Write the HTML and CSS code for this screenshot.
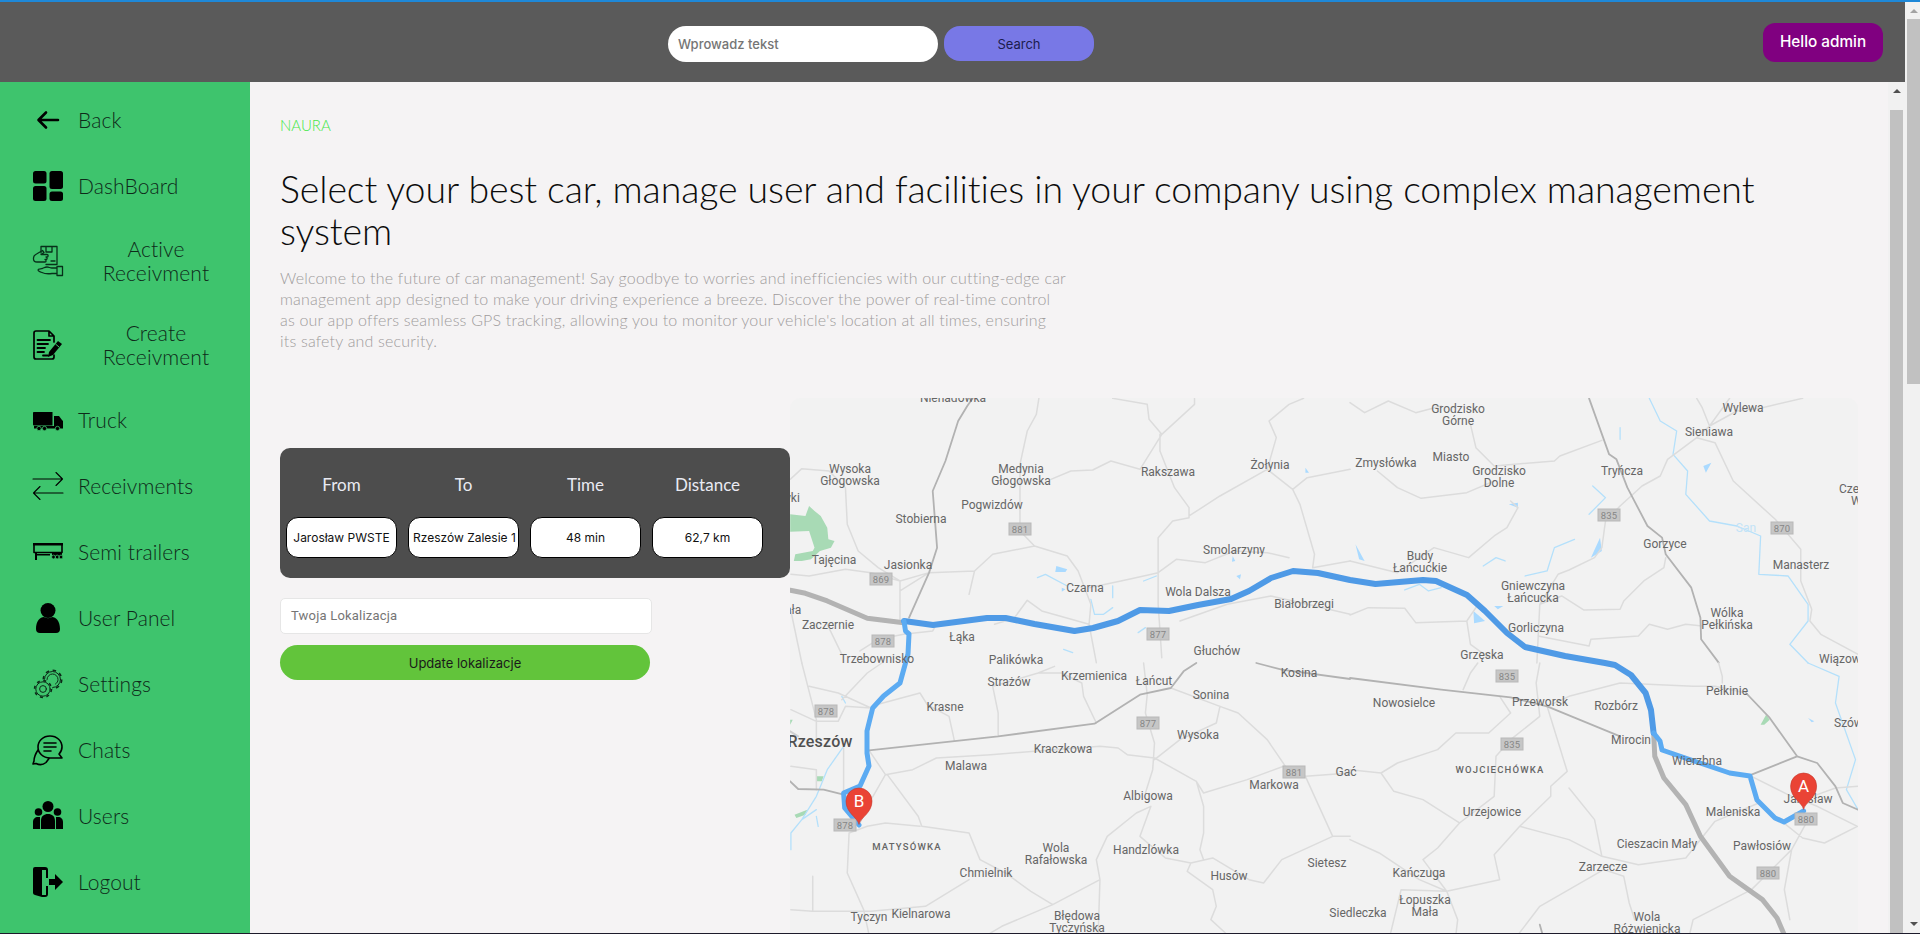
FILE: index.html
```html
<!DOCTYPE html>
<html lang="pl">
<head>
<meta charset="utf-8">
<title>NAURA</title>
<link rel="stylesheet" href="styles.css">
</head>
<body>
<div class="page">
  <div class="topline"></div>
  <div class="shell">
    <div class="main">
      <header class="header">
        <div class="search">
          <div class="search-input">Wprowadz tekst</div>
          <button class="search-btn">Search</button>
        </div>
        <div class="hello">Hello admin</div>
      </header>
      <div class="body">
        <nav class="sidebar">
          <a class="item"><svg class="icon" viewBox="0 0 30 30"><path class="ln" stroke-width="2.600" d="M25 15H6M13 7.500 5.500 15l7.500 7.500"/></svg><span>Back</span></a>
          <a class="item"><svg class="icon" viewBox="0 0 30 30"><rect class="fl" x="0" y="0" width="13.500" height="12.500" rx="2.500"/><rect class="fl" x="0" y="15" width="13.500" height="15" rx="2.500"/><rect class="fl" x="16.500" y="0" width="13.500" height="18" rx="2.500"/><rect class="fl" x="16.500" y="20.500" width="13.500" height="9.500" rx="2.500"/></svg><span>DashBoard</span></a>
          <a class="item two"><svg class="icon" viewBox="0 0 30 30"><path class="ln thin" d="M8 7V.5h16v18H13M13 .5v5.500h6V.5M18 15h4"/><path class="ln thin" d="M.5 12c0-2 1-3 3-4l6-3.500 1.500 2-3 2h6c1.500 0 1.500 2.500 0 2.500h-1c1.500 0 1.500 2.500 0 2.500h-1c1.500 0 1.500 2.500 0 2.500H4c-2.500 0-3.500-1-3.500-3z"/><path class="ln thin" d="M24 20.500h5.500V29.500H24zM24 22h-5c-2 0-3-1-5-1-2.500 0-3 1-5 1.500-1 .5-4 0-4 1.500s2 1.500 4 2.500c3 1.500 6 1.500 10 1h5"/></svg><span>Active<br>Receivment</span></a>
          <a class="item two"><svg class="icon" viewBox="0 0 30 30"><path class="ln" stroke-width="1.700" d="M21 12V6l-5-5H3Q1 1 1 3v24q0 2 2 2h16q2 0 2-2v-2M16 1v5h5"/><path class="ln" stroke-width="1.800" d="M4.500 10H17M4.500 14H15M4.500 18H12M4.500 22H11M10 25.500h5"/><path class="fl" d="M25 11l4 3-9 11-5 2 1-5z"/><path class="gap" d="M22.500 14l3.500 3"/></svg><span>Create<br>Receivment</span></a>
          <a class="item"><svg class="icon" viewBox="0 0 30 30"><path class="fl" d="M0 7.500Q0 7 1 7h18.500v13.500H1q-1 0-1-1zM21 11h5l3 4 1 1v5h-9zM1 21h29v2.500H1z"/><circle class="fl wheel" cx="6" cy="23.500" r="2.200"/><circle class="fl wheel" cx="11.500" cy="23.500" r="2.200"/><circle class="fl wheel" cx="24.500" cy="23.500" r="2.200"/></svg><span>Truck</span></a>
          <a class="item"><svg class="icon" viewBox="0 0 30 30"><path class="ln" stroke-width="1.100" d="M0 8h29.500M23 1.500 29.500 8 23 14.500M30 22H.5M7 15.500.5 22 7 28.500"/></svg><span>Receivments</span></a>
          <a class="item"><svg class="icon" viewBox="0 0 30 30"><path class="ln" stroke-width="1.600" d="M1 7h28v8.500H1z"/><path class="fl" d="M0 6h30v2.500H0zM2 17h15v1.500H2zM19 15.500h10V19H19z"/><circle class="fl wheel" cx="20.500" cy="20" r="1.900"/><circle class="fl wheel" cx="24.200" cy="20" r="1.900"/><circle class="fl wheel" cx="28" cy="20" r="1.900"/><path class="fl" d="M2 15h2v8H2z"/></svg><span>Semi trailers</span></a>
          <a class="item"><svg class="icon" viewBox="0 0 30 30"><circle class="fl" cx="15" cy="7.500" r="7.500"/><path class="fl" d="M3 26c0-8 4-12 8-12 2 1.500 6 1.500 8 0 4 0 8 4 8 12q0 4-4 4H7q-4 0-4-4z"/></svg><span>User Panel</span></a>
          <a class="item"><svg class="icon" viewBox="0 0 30 30"><circle class="ln hair" cx="19.500" cy="10.500" r="8"/><circle class="teeth big" cx="19.500" cy="10.500" r="9.200"/><path class="ln hair" d="M14 10.500a5.500 5.500 0 0 1 11 0c0 2-1 3.500-2.500 4.500"/><circle class="mask" cx="10" cy="20" r="9.500"/><circle class="ln hair" cx="10" cy="20" r="7.200"/><circle class="teeth" cx="10" cy="20" r="8.400"/><circle class="ln hair" cx="10" cy="20" r="3.400"/></svg><span>Settings</span></a>
          <a class="item"><svg class="icon" viewBox="0 0 30 30"><path class="ln mid" d="M17 1C10 1 5 6 5 12c0 6 5 11 12 11h12l-3-4c2-2 3-4 3-7 0-6-5-11-12-11z"/><path class="ln mid" d="M5 15c-2 3-4 6-4 11l-1 3 3-.5c3 1.500 7 1.500 10-1l3-4"/><path class="ln mid" d="M11 8h12M11 12h12M11 16h7"/></svg><span>Chats</span></a>
          <a class="item"><svg class="icon" viewBox="0 0 30 30"><circle class="fl" cx="15" cy="5.500" r="5.500"/><circle class="fl" cx="5.500" cy="11" r="3.800"/><circle class="fl" cx="24.500" cy="11" r="3.800"/><path class="fl" d="M8 28v-8c0-5 3-7 7-7s7 2 7 7v8zM0 28v-7c0-3 2-5 5-5h2v12zM30 28v-7c0-3-2-5-5-5h-2v12z"/></svg><span>Users</span></a>
          <a class="item"><svg class="icon" viewBox="0 0 30 30"><path class="fl" d="M0 2q0-2 2-2h10q3 0 3 3v8h-2V3H9v27l-7-2q-2-.5-2-2z"/><path class="fl" d="M13 19h2v8q0 3-3 3H9v-2h4zM16 12h6V7l8 8-8 8v-5h-6z"/></svg><span>Logout</span></a>
        </nav>
        <main class="content">
          <p class="brand">NAURA</p>
          <h1 class="title">Select your best car, manage user and facilities in your company using complex management<br>system</h1>
          <p class="intro">Welcome to the future of car management! Say goodbye to worries and inefficiencies with our cutting-edge car<br>management app designed to make your driving experience a breeze. Discover the power of real-time control<br>as our app offers seamless GPS tracking, allowing you to monitor your vehicle's location at all times, ensuring<br>its safety and security.</p>
          <section class="tools">
            <div class="left">
              <div class="panel">
                <div class="cols heads"><span>From</span><span>To</span><span>Time</span><span>Distance</span></div>
                <div class="cols vals"><div class="val">Jarosław PWSTE</div><div class="val clip">Rzeszów Zalesie 1</div><div class="val">48 min</div><div class="val">62,7 km</div></div>
              </div>
              <div class="loc">Twoja Lokalizacja</div>
              <button class="update">Update lokalizacje</button>
            </div>
            <div class="map">
              <svg class="mapsvg" viewBox="790 397 1068 537">
                <rect x="790" y="397" width="1068" height="537" class="land"/>
                <g transform="translate(780 390) scale(.3636 .3333)">
                  <path class="green" d="M28 370 70 375 80 345 95 360 112 375 130 410 133 445 150 450 140 470 110 480 85 505 60 510 38 510 42 490 90 480 95 470 80 420 28 422z"/>
                  <path class="wfill" d="M760 525 790 535 785 543 757 543zM1445 230 1455 245 1445 245zM1245 495 1252 510 1243 512zM1255 555 1268 550 1265 565zM775 590 785 595 775 602z"/>
                  <path class="water" d="M708 560 730 550 790 585M855 625 865 670 890 670 915 650M985 725 1005 710M780 775 805 785M1000 570 1035 555M915 585 915 620"/>
                  <path class="minor" d="M28 265 60 233 135 240 180 290 185 400 215 480 270 530 330 570 330 690M712 22 705 70 680 120 660 220 660 420 700 465 790 495 820 540 855 640 850 700 870 815M745 265 800 240 860 237 910 210 990 235 1050 130 1015 85 1010 40 915 22M1050 130 1140 40 1140 22M1045 130 1045 180 1085 290 1125 350 1125 380M1125 375 1210 315 1340 235 1410 295 1430 340 1470 490 1465 530M1125 380 1080 390 1040 440 1040 640 1050 800M1410 295 1450 260 1568 235M1340 235 1365 140 1345 90 1400 40 1440 22M30 550 80 555 180 535 250 545 330 570 410 545 535 540 585 490 700 465M535 540 520 610M1040 545 960 565 850 590M1040 545 1090 505 1170 515 1250 480 1340 485 1400 500M645 680 680 628 720 660 850 700M1100 690 1230 640 1350 615 1450 640 1568 670M1465 530 1568 510M330 600 410 545M130 700 170 790M30 660 60 816M220 780 270 745 340 730 420 720 430 700 M590 700 650 680"/>
                  <path class="rail" d="M530 22 515 45 490 90 455 210 420 300 432 470 410 545 355 680"/>
                  <path class="motor" d="M28 598 70 607 130 630 240 682 340 695"/>
                </g>
                <g transform="translate(1350 390) scale(.365 .3333)">
                  <path class="wfill" d="M338 660 370 690 340 697zM660 500 685 440 690 480zM15 460 40 510 25 505zM435 340 460 335 460 350zM395 645 420 645 405 655zM968 225 990 215 975 245z"/>
                  <path class="water" d="M820 22 850 90 895 120 885 190 925 240 920 310 985 390 1060 405 1125 435 1120 550 1200 555 1255 640 1255 690 1205 760 1255 816M480 555 540 540 560 470 615 445M655 370 700 320 665 285M365 525 400 500 425 510M740 110 740 145M150 597 190 580 215 600 250 590"/>
                  <path class="minor" d="M0 35 40 65 105 30 180 65 250 45M330 100 345 170 395 225 560 210 575 195 690 148M75 240 130 290 195 322 320 305 395 270M440 330 460 350 430 410 395 435 325 500 230 470 130 545 0 510M950 140 870 205 850 255 800 285 740 345 700 390 690 470 670 500 600 537 570 550 520 640 512 816M950 140 1000 155 1050 270 1165 385 1235 475 1235 570 1265 655 1260 690 1290 730 1392 790M1040 22 985 105 965 50 950 22M985 105 1060 60 1130 50 1240 22M985 105 950 140M865 500 860 530 805 570 750 630 740 655 640 657 580 615 520 640M0 672 50 650 150 652 180 695 320 690 345 650M320 690 330 760 380 800M515 735 655 765 660 745 790 735 820 700 870 715 920 700 965 705"/>
                  <path class="rail" d="M655 22 710 190 730 205 760 290 815 405 855 440 865 490 935 590 960 680 962 745 1010 815"/>
                </g>
                <g transform="translate(780 662) scale(.3636 .3333)">
                  <path class="green" d="M28 170 35 170 28 185zM100 340 120 340 115 355 102 355zM40 455 75 440 70 455 45 465z"/>
                  <path class="water" d="M175 250 130 320 100 400 60 470 30 510 30 560M60 470 100 440M100 460 105 490M170 100 180 120"/>
                  <path class="minor" d="M60 0 100 170 100 230M80 70 160 90 250 135M30 140 100 175 160 175 180 130 250 135M170 110 240 30 280 0M265 125 385 90 405 125 465 160 480 235M585 70 600 150 600 220M585 70 710 30 775 30 830 60 835 100 870 180M755 10 710 30M1010 95 1005 150 1030 240 1025 320 1005 390M1075 75 1210 130 1260 150 1340 230 1390 310 1445 340 1520 520 1568 520M1445 340 1568 330M1210 130 1200 180 1100 230 1030 290M245 262 290 335 365 320 430 285 580 275 700 265 880 250 930 255 955 275 1030 285 1145 355 1165 390 1285 350 1385 310M1145 355 1165 430 1165 510 1155 560 1165 590M295 335 380 460 390 490 520 510 550 590 620 630 690 685 750 725 880 650 870 590 900 520 980 450 1020 430 990 520 1060 585 1130 600 1190 585 1290 650 1330 660 1380 590 1520 520M1130 600 1120 625 1190 680 1200 730 1185 770 1225 810M385 490 290 480 240 490 190 510 185 630 230 740 245 816M30 740 90 745 250 745 400 730 520 650M880 650 875 816M290 335 240 430 220 480M90 745 90 640M750 725 610 790 570 816M30 310 100 320 100 380M175 255 175 390M1000 0 1010 95"/>
                  <path class="rail" d="M245 262 600 220 865 182 990 95 1075 75 1110 25 1145 0M28 355 50 378 120 380 175 395M1310 0 1380 20 1568 48"/>
                  <path class="light" d="M28 205 50 220"/>
                </g>
                <g transform="translate(1350 662) scale(.365 .3333)">
                  <path class="green" d="M1125 185 1140 155 1150 170 1135 185z"/>
                  <path class="wfill" d="M1255 165 1272 175 1265 178z"/>
                  <path class="water" d="M1255 0 1340 40 1330 120 1385 290 1360 380 1392 440"/>
                  <path class="minor" d="M310 80 330 30 350 0M520 0 510 60 520 160 440 230 400 280 395 400M410 100 440 150 380 210 290 210 240 260 130 300 85 330 0 320M85 330 120 385 200 410 300 480 395 400M300 480 240 555 200 590 265 685 410 650 395 575 465 490 550 400 550 370 595 325 540 130M600 375 670 470 690 580 790 605 920 585 1000 475 1120 420M465 490 600 530 690 580M0 530 80 570 190 650 265 685 295 770 290 816M695 620 750 640 765 720 780 770M695 620 520 730 460 816M265 685 140 680 110 816M540 130 600 100 740 60 940 70 1000 70 1085 90M1100 340 1200 395 1280 430 1390 490 1300 540 1240 525 1120 420M1250 480 1210 560 1100 680 940 770 930 816M1210 560 1190 680 1205 770M1392 370 1330 375 1280 395M1010 0 1020 40 1020 60"/>
                  <path class="rail" d="M0 45 250 80 440 103 540 130 740 220M1085 90 1150 165 1225 280 1100 335M1225 280 1280 300 1330 370 1350 420 1392 440M520 785 528 816"/>
                  <path class="motor" d="M832 210 835 280 860 345 920 425 960 520 1040 640 1130 710 1170 765 1190 816"/>
                </g>
                <path class="route" d="M904 620 933 624 987 617 1005.500 617 1034.500 623 1074.500 630 1093 627 1118 620 1140 609 1169 610 1198 604 1231 598 1249 590 1271 577 1293 570 1318 572 1350 579 1375.500 583 1423 579 1436 580 1467 594 1485 610 1507 632 1525 646 1565 655 1605 662 1615 664 1631 674 1645.600 692 1651 709 1653.600 732"/>
                <path class="route2" d="M1653.600 732 1660 740 1662 749 1700 762 1729.600 772 1750 775 1757 799 1775 817 1784 821 1803.600 810"/>
                <path class="route2" d="M904 620 905.500 630 909 633 908 653 905.500 662 900 682 883.600 695 872.700 707 867 730 867 752 869 765 860 785 843.600 792 844.700 807 859 824"/>
                <g class="shields">
                  <g transform="translate(1020 528)"><rect x="-11" y="-6" width="22" height="12"/><text y="3.500">881</text></g>
                  <g transform="translate(881 578)"><rect x="-11" y="-6" width="22" height="12"/><text y="3.500">869</text></g>
                  <g transform="translate(883 640)"><rect x="-11" y="-6" width="22" height="12"/><text y="3.500">878</text></g>
                  <g transform="translate(1158 633)"><rect x="-11" y="-6" width="22" height="12"/><text y="3.500">877</text></g>
                  <g transform="translate(1609 514)"><rect x="-11" y="-6" width="22" height="12"/><text y="3.500">835</text></g>
                  <g transform="translate(1782 527)"><rect x="-11" y="-6" width="22" height="12"/><text y="3.500">870</text></g>
                  <g transform="translate(826 710)"><rect x="-11" y="-6" width="22" height="12"/><text y="3.500">878</text></g>
                  <g transform="translate(1148 722)"><rect x="-11" y="-6" width="22" height="12"/><text y="3.500">877</text></g>
                  <g transform="translate(1294 771)"><rect x="-11" y="-6" width="22" height="12"/><text y="3.500">881</text></g>
                  <g transform="translate(845 824)"><rect x="-11" y="-6" width="22" height="12"/><text y="3.500">878</text></g>
                  <g transform="translate(1507 675)"><rect x="-11" y="-6" width="22" height="12"/><text y="3.500">835</text></g>
                  <g transform="translate(1512 743)"><rect x="-11" y="-6" width="22" height="12"/><text y="3.500">835</text></g>
                  <g transform="translate(1806 818)"><rect x="-11" y="-6" width="22" height="12"/><text y="3.500">880</text></g>
                  <g transform="translate(1768 872)"><rect x="-11" y="-6" width="22" height="12"/><text y="3.500">880</text></g>
                </g>
                <g class="labels">
                  <text x="953" y="401">Nienadówka</text>
                  <text x="850" y="472">Wysoka</text><text x="850" y="484">Głogowska</text>
                  <text x="1021" y="472">Medynia</text><text x="1021" y="484">Głogowska</text>
                  <text x="1168" y="475">Rakszawa</text><text x="1270" y="468">Żołynia</text>
                  <text x="992" y="508">Pogwizdów</text><text x="921" y="522">Stobierna</text>
                  <text x="834" y="563">Tajęcina</text><text x="908" y="568">Jasionka</text>
                  <text x="1234" y="553">Smolarzyny</text><text x="1085" y="591">Czarna</text>
                  <text x="1198" y="595">Wola Dalsza</text><text x="1304" y="607">Białobrzegi</text>
                  <text x="828" y="628">Zaczernie</text><text x="962" y="640">Łąka</text>
                  <text x="1217" y="654">Głuchów</text><text x="877" y="662">Trzebownisko</text>
                  <text x="1016" y="663">Palikówka</text>
                  <text x="787" y="501">Styki</text><text x="788" y="613">Biała</text>
                  <text x="1458" y="412">Grodzisko</text><text x="1458" y="424">Górne</text>
                  <text x="1743" y="411">Wylewa</text><text x="1709" y="435">Sieniawa</text>
                  <text x="1386" y="466">Zmysłówka</text><text x="1451" y="460">Miasto</text>
                  <text x="1499" y="474">Grodzisko</text><text x="1499" y="486">Dolne</text>
                  <text x="1622" y="474">Tryńcza</text>
                  <text x="1665" y="547">Gorzyce</text><text x="1801" y="568">Manasterz</text>
                  <text x="1420" y="559">Budy</text><text x="1420" y="571">Łańcuckie</text>
                  <text x="1533" y="589">Gniewczyna</text><text x="1533" y="601">Łańcucka</text>
                  <text x="1536" y="631">Gorliczyna</text>
                  <text x="1727" y="616">Wólka</text><text x="1727" y="628">Pełkińska</text>
                  <text x="1482" y="658">Grzęska</text>
                  <text class="start" x="1839" y="492">Czerwona</text><text class="start" x="1851" y="504">Wieś</text>
                  <text class="start" x="1819" y="662">Wiązownica</text>
                  <text class="river" x="1746" y="531">San</text>
                  <text x="1009" y="685">Strażów</text><text x="1094" y="679">Krzemienica</text>
                  <text x="1154" y="684">Łańcut</text><text x="1299" y="676">Kosina</text>
                  <text x="1211" y="698">Sonina</text><text x="945" y="710">Krasne</text>
                  <text class="city" x="820" y="746">Rzeszów</text>
                  <text x="1198" y="738">Wysoka</text><text x="1063" y="752">Kraczkowa</text>
                  <text x="966" y="769">Malawa</text><text x="1346" y="775">Gać</text>
                  <text x="1274" y="788">Markowa</text><text x="1148" y="799">Albigowa</text>
                  <text class="caps" x="907" y="849">MATYSÓWKA</text>
                  <text x="1056" y="851">Wola</text><text x="1056" y="863">Rafałowska</text>
                  <text x="1146" y="853">Handzlówka</text><text x="1327" y="866">Sietesz</text>
                  <text x="986" y="876">Chmielnik</text><text x="1229" y="879">Husów</text>
                  <text x="869" y="920">Tyczyn</text><text x="921" y="917">Kielnarowa</text>
                  <text x="1077" y="919">Błędowa</text><text x="1077" y="931">Tyczyńska</text>
                  <text x="1358" y="916">Siedleczka</text>
                  <text x="1404" y="706">Nowosielce</text><text x="1540" y="705">Przeworsk</text>
                  <text x="1616" y="709">Rozbórz</text><text x="1727" y="694">Pełkinie</text>
                  <text class="start" x="1834" y="726">Szówsko</text>
                  <text x="1631" y="743">Mirocin</text><text x="1697" y="764">Wierzbna</text>
                  <text class="caps" x="1500" y="772">WOJCIECHÓWKA</text>
                  <text x="1492" y="815">Urzejowice</text><text x="1733" y="815">Maleniska</text>
                  <text x="1808" y="802">Jarosław</text><text x="1762" y="849">Pawłosiów</text>
                  <text x="1657" y="847">Cieszacin Mały</text><text x="1603" y="870">Zarzecze</text>
                  <text x="1419" y="876">Kańczuga</text>
                  <text x="1425" y="903">Łopuszka</text><text x="1425" y="915">Mała</text>
                  <text x="1647" y="920">Wola</text><text x="1647" y="932">Różwienicka</text>
                </g>
                <g transform="translate(859 823)"><path class="pin" d="M0 0C-2-7-13-11-13-23A13 13 0 0 1 13-23C13-11 2-7 0 0z"/><text class="pinlabel" y="-17">B</text></g>
                <g transform="translate(1803.600 808)"><path class="pin" d="M0 0C-2-7-13-11-13-23A13 13 0 0 1 13-23C13-11 2-7 0 0z"/><text class="pinlabel" y="-17">A</text></g>
              </svg>
            </div>
          </section>
        </main>
        <div class="scroll inner"><i class="up dark"></i><b class="thumb"></b></div>
      </div>
    </div>
    <div class="scroll outer"><i class="up"></i><b class="thumb"></b><i class="down"></i></div>
  </div>
  <div class="bottomline"></div>
</div>
</body>
</html>
```
FILE: styles.css
```css
* { box-sizing: border-box; }
html, body { margin: 0; height: 100%; overflow: hidden; }
body { font-family: "Lato", "Liberation Sans", sans-serif; background: #f5f3f4; color: #111; }
.page { display: flex; flex-direction: column; height: 934px; overflow: hidden; }
.topline { height: 2px; flex: none; background: #1e88d8; }
.bottomline { height: 1px; flex: none; background: #1d1b2b; }
.shell { flex: 1; min-height: 0; display: flex; }
.main { flex: 1; min-width: 0; display: flex; flex-direction: column; }

.header { flex: none; height: 80px; background: #5a5a5a; display: flex; align-items: flex-start; position: relative; padding: 24px 0 0 668px; }
.search { display: flex; gap: 6px; align-items: flex-start; }
.search-input { width: 270px; height: 36px; background: #fff; border-radius: 18px; padding: 0 10px; line-height: 37px; font-family: "Inter", sans-serif; font-size: 13px; font-weight: 500; color: #757575; }
.search-btn { width: 150px; height: 35px; border: 0; border-radius: 16px; background: #7878e6; color: #1c1c4e; font-family: "Inter", sans-serif; font-size: 13px; }
.hello { position: absolute; right: 22px; top: 21px; width: 120px; height: 39px; border-radius: 12px; background: #800080; color: #fff; text-align: center; line-height: 38px; font-family: "Inter", sans-serif; font-size: 15.300px; font-weight: 500; }

.body { flex: 1; min-height: 0; display: flex; }
.sidebar { flex: none; width: 250px; background: #3ec46d; padding: 5px 16px 0 33px; display: flex; flex-direction: column; }
.item { display: flex; align-items: center; gap: 15px; min-height: 66px; padding: 18px 0; font-size: 21px; line-height: 24px; font-weight: 300; color: #0e2a1a; letter-spacing: .1px; white-space: nowrap; }
.item span { display: block; }
.item.two span { flex: 1; text-align: center; }
.icon { width: 30px; height: 30px; flex: none; overflow: visible; }
.fl { fill: #000; }
.fl.wheel { stroke: #3ec46d; stroke-width: .8; }
.ln { fill: none; stroke: #000; stroke-linecap: round; stroke-linejoin: round; }
.ln.thin { stroke-width: 1.300; stroke: #07301a; }
.ln.mid { stroke-width: 1.600; }
.ln.hair { stroke-width: 1; stroke: #0c2a18; }
.gap { fill: none; stroke: #3ec46d; stroke-width: 1; }
.teeth { fill: none; stroke: #0c2a18; stroke-width: 1.600; stroke-dasharray: 3 3.600; }
.teeth.big { stroke-dasharray: 3.500 3.700; }
.mask { fill: #3ec46d; }

.content { flex: 1; min-width: 0; padding: 0 28px 0 30px; overflow: hidden; }
.brand { margin: 34px 0 0; font-size: 15px; line-height: 18px; font-weight: 300; color: #46e84a; }
.title { margin: 34px 0 0; font-size: 37.500px; line-height: 42px; font-weight: 300; color: #0c0c0c; letter-spacing: -.1px; }
.intro { margin: 15px 0 0; font-size: 16px; line-height: 21px; font-weight: 300; letter-spacing: .19px; color: #a09c9c; white-space: nowrap; }
.tools { margin-top: 47px; display: flex; align-items: flex-start; }
.left { flex: none; width: 510px; padding-top: 50px; }
.panel { height: 130px; background: #4d4d4d; border-radius: 10px; padding: 0 6px; }
.cols { display: grid; grid-template-columns: repeat(4, 111px); column-gap: 11px; }
.heads { height: 69px; padding-top: 3px; align-items: center; text-align: center; color: #e9eaf2; font-size: 17px; font-weight: 400; }
.val { height: 41px; background: #fff; border: 1px solid #000; border-radius: 12px; text-align: center; line-height: 39px; font-family: "Inter", sans-serif; font-size: 12px; color: #111; white-space: nowrap; overflow: hidden; }
.val.clip { text-align: left; padding: 0 4px; }
.loc { margin-top: 20px; width: 372px; height: 36px; background: #fff; border: 1px solid #e6e6e6; border-radius: 5px; padding-left: 10px; line-height: 34px; font-family: "Roboto", sans-serif; font-size: 13px; letter-spacing: .2px; color: #757575; }
.update { display: block; margin-top: 11px; width: 370px; height: 35px; border: 0; border-radius: 18px; background: #62c43b; font-family: "Inter", sans-serif; font-size: 13px; color: #1a1a1a; }

.map { flex: none; width: 1068px; height: 537px; border-radius: 10px 10px 0 0; overflow: hidden; }
.mapsvg { display: block; width: 1068px; height: 537px; }
.mapsvg path { fill: none; stroke-linejoin: round; stroke-linecap: round; vector-effect: non-scaling-stroke; }
.land { fill: #f2f2f2; }
.mapsvg .green { fill: #a8dab5; }
.mapsvg .wfill { fill: #aadaff; }
.mapsvg .water { stroke: #b4e0fb; stroke-width: 1.300; }
.mapsvg .minor { stroke: #dcdcdc; stroke-width: 1.500; }
.mapsvg .rail { stroke: #b2b2b2; stroke-width: 1.800; }
.mapsvg .light { stroke: #d0d0d0; stroke-width: 2; }
.mapsvg .motor { stroke: #b3b3b3; stroke-width: 5; }
.mapsvg .route { stroke: #4f9ae6; stroke-width: 6; }
.mapsvg .route2 { stroke: #5cabf2; stroke-width: 5; }
.shields rect { fill: #c6c6c6; stroke: #b8b8b8; stroke-width: 1; }
.shields text { font-family: "Roboto", sans-serif; font-size: 9.500px; fill: #878787; text-anchor: middle; letter-spacing: .2px; }
.labels text { font-family: "Roboto", sans-serif; font-size: 12px; fill: #666; text-anchor: middle; }
.labels .start { text-anchor: start; }
.labels .caps { font-size: 9.500px; font-weight: 500; letter-spacing: 1.200px; }
.labels .city { font-size: 16px; font-weight: 500; fill: #505050; letter-spacing: .2px; }
.labels .river { fill: #c3e3f7; }
.mapsvg .pin { fill: #ea4335; stroke: #c5352a; stroke-width: .6; }
.pinlabel { font-family: "Roboto", sans-serif; font-size: 17px; fill: #fff; text-anchor: middle; }

.scroll { flex: none; width: 17px; background: #f1f1f1; display: flex; flex-direction: column; align-items: center; }
.scroll .thumb { display: block; width: 13px; background: #c1c1c1; }
.scroll .up, .scroll .down { display: block; width: 0; height: 0; border-left: 4px solid transparent; border-right: 4px solid transparent; }
.scroll .up { border-bottom: 4px solid #a3a3a3; margin-top: 7px; }
.scroll .up.dark { border-bottom-color: #505050; }
.scroll .down { border-top: 4px solid #505050; margin-top: auto; margin-bottom: 7px; }
.inner .thumb { margin-top: 17px; flex: 1; }
.outer { width: 15px; align-items: flex-start; }
.outer .up, .outer .down { margin-left: 4.500px; }
.outer .thumb { margin-top: 6px; margin-left: 2px; height: 365px; }
```
